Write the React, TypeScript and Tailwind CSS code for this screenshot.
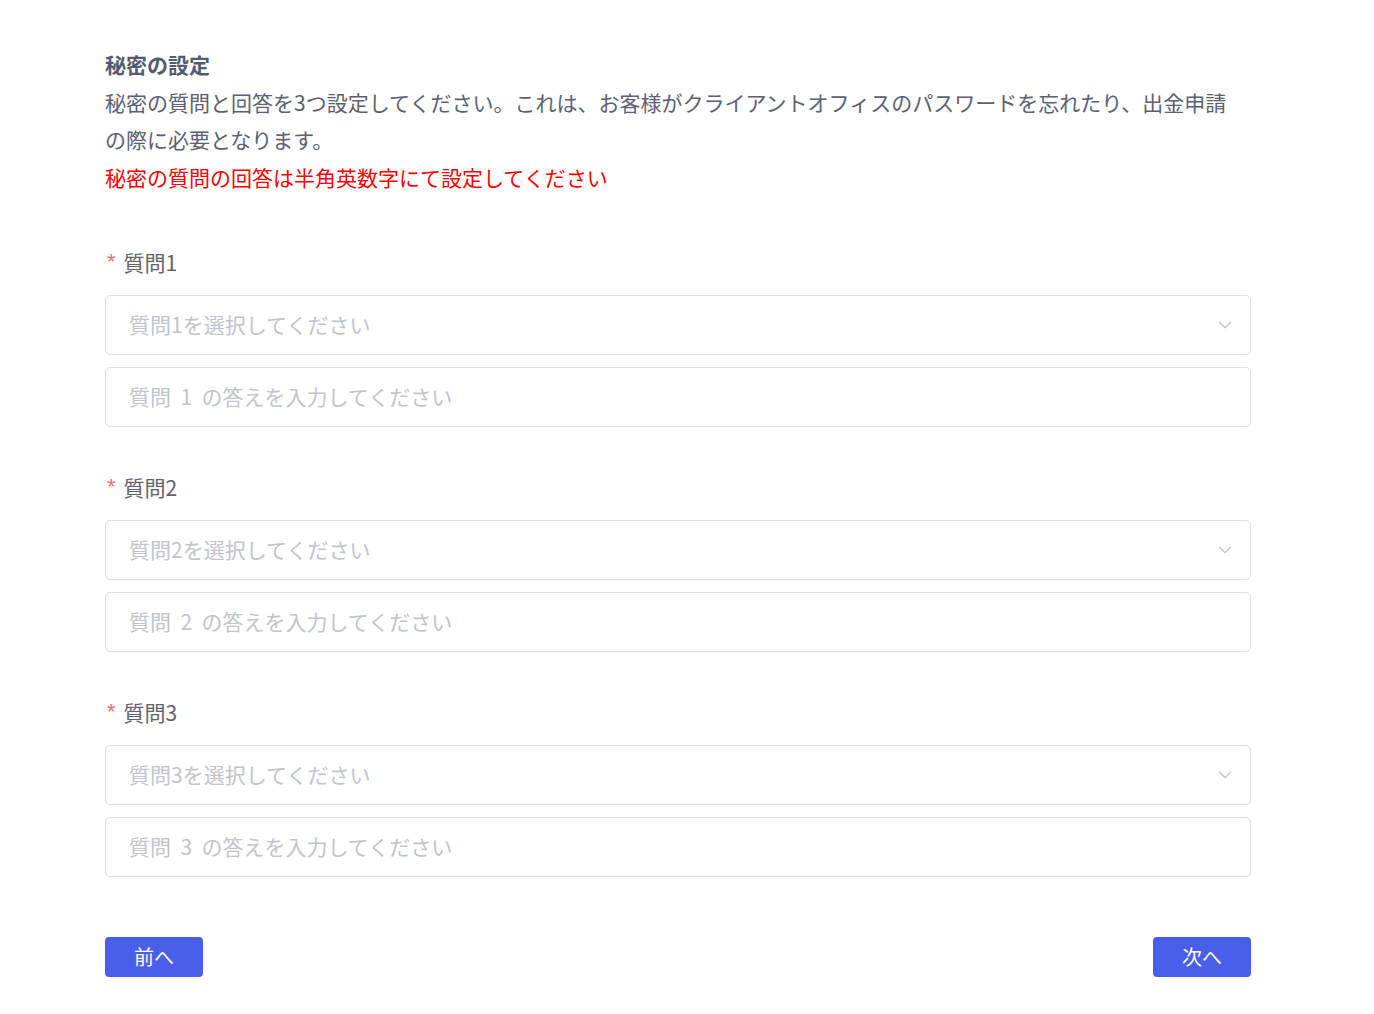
import { ChevronDown } from "lucide-react";

const FONT = "font-['Noto_Sans_CJK_JP','Noto_Sans',sans-serif]";

function QuestionBlock({ n }: { n: number }) {
  return (
    <div className="flex flex-col">
      <div className="flex h-[30px] items-center text-[21px] text-[#5f6270]">
        <span className="mr-[8px] ml-[2px] -mt-[3px] font-['Liberation_Sans',sans-serif] text-[22px] text-[#f56c6c]">*</span>
        <span>質問{n}</span>
      </div>
      <div className="mt-[17px] flex h-[60px] items-center justify-between rounded-[5px] border border-[#dcdfe6] bg-white pr-[14px] pl-[23px]">
        <span className="text-[21px] text-[#c0c4cc]">質問{n}を選択してください</span>
        <ChevronDown className="h-[22px] w-[22px] text-[#c0c4cc]" strokeWidth={1.3} />
      </div>
      <div className="mt-[12px] flex h-[60px] items-center rounded-[5px] border border-[#dcdfe6] bg-white pl-[23px]">
        <span className="text-[21px] text-[#c0c4cc]">
          質問&nbsp;&nbsp;{n}&nbsp;&nbsp;の答えを入力してください
        </span>
      </div>
    </div>
  );
}

export default function App() {
  return (
    <div className={`min-h-screen bg-white ${FONT}`}>
      <div className="w-[1251px] pt-[46px] pl-[105px]">
        <h2 className="text-[21px] leading-[37.5px] font-bold text-[#555a6e]">秘密の設定</h2>
        <p className="w-[1135px] text-[21px] leading-[37.5px] text-[#5d6070]">
          秘密の質問と回答を3つ設定してください。これは、お客様がクライアントオフィスのパスワードを忘れたり、出金申請の際に必要となります。
        </p>
        <p className="text-[21px] leading-[37.5px] text-[#ff0000]">
          秘密の質問の回答は半角英数字にて設定してください
        </p>

        <div className="mt-[52px] flex flex-col gap-[46px]">
          <QuestionBlock n={1} />
          <QuestionBlock n={2} />
          <QuestionBlock n={3} />
        </div>

        <div className="mt-[60px] flex justify-between">
          <button className="flex h-[40px] w-[98px] items-center justify-center rounded-[4px] bg-[#4a5fe9] text-[20px] text-white">
            前へ
          </button>
          <button className="flex h-[40px] w-[98px] items-center justify-center rounded-[4px] bg-[#4a5fe9] text-[20px] text-white">
            次へ
          </button>
        </div>
      </div>
    </div>
  );
}
